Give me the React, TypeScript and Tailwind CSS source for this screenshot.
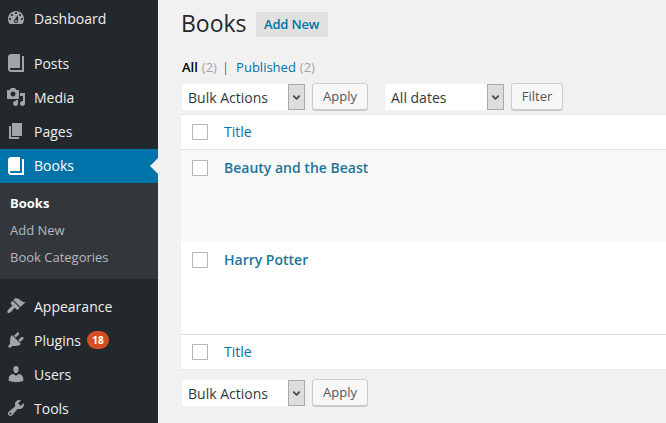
import { ChevronDown } from "lucide-react";

const BOOK = "M16 3h2v16H5c-1.66 0-3-1.34-3-3V4c0-1.66 1.34-3 3-3h9v14H5c-.55 0-1 .45-1 1s.45 1 1 1h11V3z";

const icons: Record<string, string> = {
  dashboard: "M3.76 16h12.48c1.1-1.37 1.76-3.11 1.76-5 0-4.42-3.58-8-8-8s-8 3.58-8 8c0 1.89.66 3.63 1.76 5zM10 4c.55 0 1 .45 1 1s-.45 1-1 1-1-.45-1-1 .45-1 1-1zM6 6c.55 0 1 .45 1 1s-.45 1-1 1-1-.45-1-1 .45-1 1-1zm8 0c.55 0 1 .45 1 1s-.45 1-1 1-1-.45-1-1 .45-1 1-1zm-5.37 5.55L12 7v6c0 1.1-.9 2-2 2s-2-.9-2-2c0-.57.24-1.08.63-1.45zM4 10c.55 0 1 .45 1 1s-.45 1-1 1-1-.45-1-1 .45-1 1-1zm12 0c.55 0 1 .45 1 1s-.45 1-1 1-1-.45-1-1 .45-1 1-1zm-5 3c0-.55-.45-1-1-1s-1 .45-1 1 .45 1 1 1 1-.45 1-1z",
  book: BOOK,
  media: "M13 11V4c0-.55-.45-1-1-1h-1.67L9 1H5L3.67 3H2c-.55 0-1 .45-1 1v7c0 .55.45 1 1 1h10c.55 0 1-.45 1-1zM7 4.5c1.38 0 2.5 1.12 2.5 2.5S8.38 9.5 7 9.5 4.5 8.38 4.5 7 5.62 4.5 7 4.5zM14 6h5v10.5c0 1.38-1.12 2.5-2.5 2.5S14 17.88 14 16.5s1.12-2.5 2.5-2.5c.17 0 .34.02.5.05V9h-3V6zm-4 8.05V13h2v3.5c0 1.38-1.12 2.5-2.5 2.5S7 17.88 7 16.5 8.12 14 9.5 14c.17 0 .34.02.5.05z",
  pages: "M6 15V2h10v13H6zm-1 1h8v2H3V5h2v11z",
  appearance: "M14.48 11.06L7.41 3.99l1.5-1.5c.5-.56 2.3-.47 3.51.32 1.21.8 1.43 1.28 2.91 2.1 1.18.64 2.45 1.26 4.45.85zm-.71.71L6.7 4.7 4.93 6.47c-.39.39-.39 1.02 0 1.41l1.06 1.06c.39.39.39 1.03 0 1.42-.6.6-1.43 1.11-2.21 1.69-.35.26-.7.53-1.01.84-1.17 1.17-1.9 2.9-1.06 3.75.85.85 2.58.11 3.75-1.06.31-.31.58-.66.84-1.01.58-.78 1.09-1.61 1.69-2.21.39-.39 1.03-.39 1.42 0l1.06 1.06c.39.39 1.02.39 1.41 0z",
  plugins: "M13.11 4.36L9.87 7.6 8 5.73l3.24-3.24c.35-.34 1.05-.2 1.56.32.52.51.66 1.21.31 1.55zm-8 1.77l.91-1.12 9.01 9.01-1.19.84c-.71.71-2.63 1.16-3.82 1.16H6.14L4.9 17.26c-.59.59-1.54.59-2.12 0-.59-.58-.59-1.53 0-2.12l1.24-1.24v-3.88c0-1.13.4-3.19 1.09-3.89zm7.26 3.97l3.24-3.24c.34-.35 1.04-.21 1.55.31.52.51.66 1.21.31 1.55l-3.24 3.25z",
  users: "M10 9.25c-2.27 0-2.73-3.44-2.73-3.44C7 4.02 7.82 2 9.97 2c2.16 0 2.98 2.02 2.71 3.81 0 0-.41 3.44-2.68 3.44zm0 2.57L12.72 10c2.39 0 4.52 2.33 4.52 4.53v2.49s-3.65 1.13-7.24 1.13c-3.65 0-7.24-1.13-7.24-1.13v-2.49c0-2.25 1.94-4.48 4.47-4.48z",
  tools: "M16.68 9.77c-1.34 1.34-3.3 1.67-4.95.99l-5.41 6.52c-.99.99-2.59.99-3.58 0s-.99-2.59 0-3.57l6.52-5.42c-.68-1.65-.35-3.61.99-4.95 1.28-1.28 3.12-1.62 4.72-1.06l-2.89 2.89 2.82 2.82 2.86-2.87c.53 1.58.18 3.39-1.08 4.65zM3.81 16.21c.4.39 1.04.39 1.43 0 .4-.4.4-1.04 0-1.43-.39-.4-1.03-.4-1.43 0-.39.39-.39 1.03 0 1.43z",
};

const Dashicon = ({ name, className }: { name: string; className: string }) => (
  <svg viewBox="0 0 20 20" className={`h-5 w-5 shrink-0 fill-current ${className}`}>
    <path d={icons[name]} />
  </svg>
);

const MenuItem = ({ icon, label, badge }: { icon: string; label: string; badge?: string }) => (
  <div className="flex h-[34px] items-center pl-[6px] text-[14px] text-[#eeeeee]">
    <Dashicon name={icon} className="text-[#a0a5aa]" />
    <span className="ml-2">{label}</span>
    {badge && (
      <span className="ml-[6px] flex h-[18px] w-[22px] items-center justify-center rounded-full bg-[#d54e21] text-[10px] font-bold text-white">
        {badge}
      </span>
    )}
  </div>
);

const FakeSelect = ({ label, width }: { label: string; width: string }) => (
  <div className={`flex h-[26px] items-stretch bg-white text-[14px] text-[#32373c] ${width}`}>
    <span className="flex flex-1 items-center pl-[6px]">{label}</span>
    <span className="flex w-[17px] items-center justify-center border border-[#a9a9a9] bg-[#dddddd] text-[#444444]">
      <ChevronDown size={11} strokeWidth={3.5} />
    </span>
  </div>
);

const ActionButton = ({ label, width }: { label: string; width: string }) => (
  <div className={`-mt-px flex h-[27px] items-center justify-center rounded-[3px] border border-[#cccccc] bg-[#f7f7f7] text-[13px] text-[#555555] shadow-[0_1px_0_#cccccc] ${width}`}>
    {label}
  </div>
);

const Checkbox = () => <div className="h-4 w-4 shrink-0 border border-[#b4b9be] bg-white" />;

const BookRow = ({ title, striped }: { title: string; striped?: boolean }) => (
  <div className={`flex h-[92px] items-start gap-4 pl-[11px] pt-[10px] ${striped ? "bg-[#f9f9f9]" : "bg-white"}`}>
    <Checkbox />
    <span className="text-[14px] leading-4 font-semibold text-[#21759b]">{title}</span>
  </div>
);

const HeadRow = ({ className }: { className: string }) => (
  <div className={`flex h-[35px] items-center gap-4 border-[#e1e1e1] pl-[11px] text-[14px] text-[#0073aa] ${className}`}>
    <Checkbox />
    <span className="pb-[2px]">Title</span>
  </div>
);

export default function App() {
  return (
    <div className="flex h-[423px] w-[666px] overflow-hidden bg-[#f1f1f1] font-['Open_Sans',sans-serif]">
      <aside className="w-[158px] shrink-0 bg-[#23282d] pt-px">
        <MenuItem icon="dashboard" label="Dashboard" />
        <div className="h-[11px]" />
        <MenuItem icon="book" label="Posts" />
        <MenuItem icon="media" label="Media" />
        <MenuItem icon="pages" label="Pages" />
        <div className="h-px" />
        <div className="relative flex h-[34px] items-center bg-[#0073aa] pl-[6px] text-[14px] text-white">
          <Dashicon name="book" className="text-white" />
          <span className="ml-2 pb-[2px]">Books</span>
          <span className="absolute top-[9px] right-0 border-y-8 border-r-8 border-y-transparent border-r-[#f1f1f1]" />
        </div>
        <div className="flex h-[96px] flex-col bg-[#32373c] pt-[7px] text-[13px] leading-[27px] text-[#b4b9be]">
          <span className="pl-[10px] font-bold text-white">Books</span>
          <span className="pl-[10px]">Add New</span>
          <span className="pl-[10px]">Book Categories</span>
        </div>
        <div className="h-[10px]" />
        <MenuItem icon="appearance" label="Appearance" />
        <MenuItem icon="plugins" label="Plugins" badge="18" />
        <MenuItem icon="users" label="Users" />
        <MenuItem icon="tools" label="Tools" />
      </aside>

      <main className="min-w-0 flex-1 pl-[23px]">
        <div className="flex h-[57px] items-start pt-[11px]">
          <h1 className="text-[23px] leading-[25px] font-normal text-[#23282d]">Books</h1>
          <span className="mt-px ml-[9px] flex h-[25px] w-[72px] items-center justify-center bg-[#e0e0e0] text-[13px] font-semibold tracking-[-0.2px] text-[#0073aa]">
            Add New
          </span>
        </div>

        <div className="flex h-[22px] items-center pl-px text-[13px] text-[#a0a5aa]">
          <span className="font-semibold text-black">All</span>
          <span className="ml-1">(2)</span>
          <span className="mr-[7px] ml-[5px] text-[#666666]">|</span>
          <span className="text-[#0073aa]">Published</span>
          <span className="ml-1">(2)</span>
        </div>

        <div className="mt-[5px] flex h-[30px] items-start pl-px">
          <FakeSelect label="Bulk Actions" width="w-[123px]" />
          <div className="ml-[7px]">
            <ActionButton label="Apply" width="w-[56px]" />
          </div>
          <div className="ml-[17px]">
            <FakeSelect label="All dates" width="w-[119px]" />
          </div>
          <div className="ml-[7px]">
            <ActionButton label="Filter" width="w-[52px]" />
          </div>
        </div>

        <div className="w-[485px] border-t border-[#e5e5e5] shadow-[0_1px_1px_rgba(0,0,0,0.04)]">
          <HeadRow className="border-b bg-white" />
          <BookRow title="Beauty and the Beast" striped />
          <BookRow title="Harry Potter" />
          <HeadRow className="border-t bg-white" />
        </div>

        <div className="mt-[11px] flex items-start pl-px">
          <FakeSelect label="Bulk Actions" width="w-[123px]" />
          <div className="ml-[7px]">
            <ActionButton label="Apply" width="w-[56px]" />
          </div>
        </div>
      </main>
    </div>
  );
}
